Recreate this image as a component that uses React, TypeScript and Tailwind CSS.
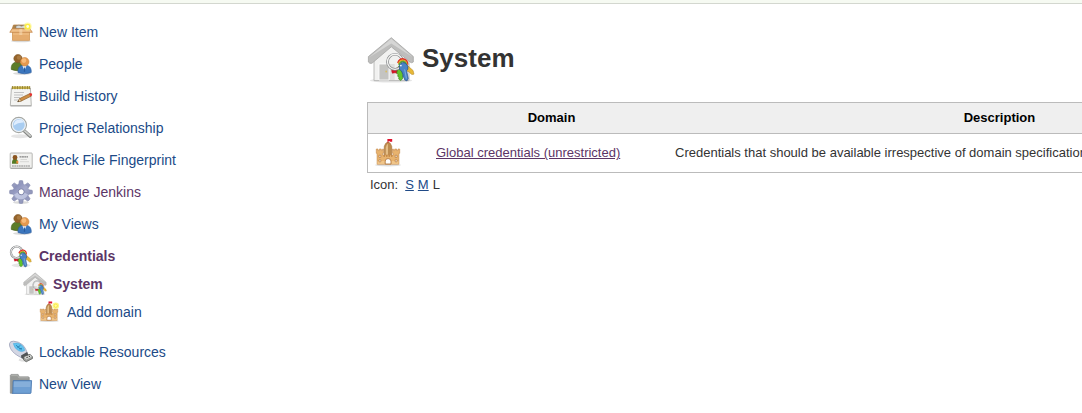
import React from "react";

function Sparkle({ x, y, r = 3 }: { x: number; y: number; r?: number }) {
  return (
    <g>
      <circle cx={x} cy={y} r={r + 1.2} fill="#fdf67a" opacity="0.6" />
      <circle cx={x} cy={y} r={r} fill="#fcee3c" />
      <circle cx={x} cy={y} r={r * 0.5} fill="#fffde0" />
    </g>
  );
}

function BoxIcon() {
  return (
    <svg viewBox="0 0 24 24" className="size-6">
      <ellipse cx="12" cy="20.9" rx="10" ry="1.4" fill="#000" opacity="0.15" />
      <path d="M4.5 5H20L21 9.5H3Z" fill="#a9834f" stroke="#b57a38" strokeWidth="0.7" />
      <path d="M7 6l3-.8 2.5 1 2.5-1 2 .8-.5 2.4H7Z" fill="#d7d9d6" stroke="#777" strokeWidth="0.5" />
      <path d="M3.5 9.3H20.5V20.3H3.5Z" fill="#ecb87d" stroke="#c98a45" strokeWidth="0.7" />
      <path d="M3.5 15H20.5V20.3H3.5Z" fill="#e2a768" opacity="0.7" />
      <path d="M3 8.8H21L23.3 12.3H.8Z" fill="#f0c08a" stroke="#c08040" strokeWidth="0.7" />
      <path d="M10.3 9h3v6h-3z" fill="#f6d9b0" opacity="0.6" />
      <Sparkle x={18.7} y={6.5} r={2.8} />
    </svg>
  );
}

function PeopleIcon() {
  return (
    <svg viewBox="0 0 24 24" className="size-6">
      <ellipse cx="13" cy="21.5" rx="9" ry="1.5" fill="#000" opacity="0.14" />
      <path d="M2.3 17.5C1.8 13 4 10 8.3 10s6.2 3 5.8 7.5Q8 20 2.3 17.5Z" fill="#5c7c28" stroke="#3f5a18" strokeWidth="0.6" />
      <circle cx="9" cy="6.6" r="4.2" fill="#94632b" stroke="#7d5220" strokeWidth="0.5" />
      <circle cx="10" cy="5.6" r="2.2" fill="#b98a50" opacity="0.6" />
      <path d="M9 20.6C8.5 15.8 10.8 13 15.5 13s7.2 2.8 6.7 7.6Q15.5 23 9 20.6Z" fill="#3b76bd" stroke="#2a5a9c" strokeWidth="0.6" />
      <path d="M13.3 13.5l2.2 5 2.1-5Z" fill="#eaf2fc" />
      <path d="M15.1 15.5h.8l.3 4.3h-1.4Z" fill="#2a5a9c" />
      <circle cx="15.7" cy="9.8" r="4.3" fill="#e5994f" stroke="#c47a35" strokeWidth="0.5" />
      <circle cx="14.9" cy="8.6" r="2.4" fill="#ffc98c" opacity="0.7" />
    </svg>
  );
}

function NotepadIcon() {
  return (
    <svg viewBox="0 0 24 24" className="size-6">
      <path d="M1.5 21.2h21v1.6h-21z" fill="#888" opacity="0.45" />
      <path d="M2.4 4H21.4L22.3 21.5H1.3Z" fill="#f4f4f2" stroke="#a5a5a1" strokeWidth="0.8" />
      <path d="M2.8 2.4H21V5H2.8Z" fill="#c8b44a" />
      <path d="M3.5 2v3.2M6 2v3.2M8.5 2v3.2M11 2v3.2M13.5 2v3.2M16 2v3.2M18.5 2v3.2M20.7 2v3.2" stroke="#8b7a32" strokeWidth="0.8" />
      <path d="M5 8.5h10M5 11h9M5 13.5h6M5 16h4" stroke="#b4b4b4" strokeWidth="0.8" />
      <path d="M8.8 17.7l1.9-3.2L21 9.5l1.4 2.6-10.2 5Z" fill="#cf8e44" stroke="#80521d" strokeWidth="0.6" />
      <path d="M8.8 17.7l1.9-3.2 1.7 2.5Z" fill="#f0d5a9" stroke="#66451e" strokeWidth="0.4" />
      <path d="M8.6 17.8l1.3-.3-.6-1Z" fill="#222" />
      <path d="M20.2 9.9l1.6-.9q1.8.4 1.3 2.3l-1.6.9Z" fill="#e63232" />
    </svg>
  );
}

function MagnifierIcon() {
  return (
    <svg viewBox="0 0 24 24" className="size-6">
      <ellipse cx="11" cy="20.2" rx="9" ry="2" fill="#000" opacity="0.1" />
      <path d="M15.4 15l5.8 5.3" stroke="#858784" strokeWidth="3.4" strokeLinecap="round" />
      <path d="M15.4 14.7l5.8 5.2" stroke="#cfd1ce" strokeWidth="1.6" strokeLinecap="round" />
      <circle cx="9.8" cy="9" r="7.6" fill="#b8d5f2" stroke="#a5a7a2" strokeWidth="1.2" />
      <circle cx="9.8" cy="9" r="6.5" fill="#a9cdf1" stroke="#f0f2f4" strokeWidth="1.1" />
      <path d="M4.5 9.7Q5 4 10.2 3.5q3.6 0 4.6 3Q9.2 6.2 4.5 9.7Z" fill="#e4f1ff" opacity="0.9" />
    </svg>
  );
}

function IdCardIcon() {
  return (
    <svg viewBox="0 0 24 24" className="size-6">
      <rect x="1.2" y="5" width="22" height="15.2" rx="0.8" fill="#f1f1ef" stroke="#b0b0ae" strokeWidth="0.9" />
      <path d="M1.5 20.4h21.7" stroke="#9d9d9a" strokeWidth="0.8" />
      <path d="M3 15.8q-.3-5 3-5t3 5Z" fill="#557b25" />
      <circle cx="6" cy="9.5" r="2.4" fill="#8b5520" />
      <path d="M7.3 15.5v-2.7h2v2.7Z" fill="#e78b3a" />
      <path d="M10.5 8.9h8.5" stroke="#666" strokeWidth="1" strokeDasharray="2 .4" />
      <path d="M11.5 11.5h6.5M11 13.7h9" stroke="#d0d0ce" strokeWidth="0.8" />
      <path d="M3 18h18.3" stroke="#888" strokeWidth="1.2" strokeDasharray="1.8 .5" />
    </svg>
  );
}

const TEETH = [0, 45, 90, 135, 180, 225, 270, 315];

function GearIcon() {
  return (
    <svg viewBox="0 0 24 24" className="size-6">
      <defs>
        <linearGradient id="gear" x1="0" y1="0" x2="1" y2="1">
          <stop offset="0" stopColor="#7c83b0" />
          <stop offset="0.5" stopColor="#a6aacb" />
          <stop offset="1" stopColor="#8b91b6" />
        </linearGradient>
      </defs>
      <ellipse cx="12" cy="22.4" rx="8" ry="1.4" fill="#000" opacity="0.14" />
      {TEETH.map((a) => (
        <path key={a} d="M9.4 6L10.3.8q1.7-.6 3.4 0L14.6 6Z" transform={`rotate(${a} 12 12)`} fill="#9499bd" stroke="#7a80a6" strokeWidth="0.5" />
      ))}
      <circle cx="12" cy="12" r="8.2" fill="url(#gear)" />
      <path d="M5 14.5Q12 9.5 19 14.5Q17 19 12 19.3Q7 19 5 14.5Z" fill="#d0d5ec" opacity="0.65" />
      <circle cx="12.2" cy="11.8" r="3" fill="#fff" stroke="#7379a2" strokeWidth="0.9" />
    </svg>
  );
}

function KeyBunch() {
  return (
    <g strokeLinejoin="round">
      <path d="M9.6 12.9L7.2 13.8l-2.2 1.2.6 2.2 2.2-.4 1 .6 2.8-2.3Z" fill="#d81627" stroke="#a40c18" strokeWidth="0.3" />
      <path d="M15.6 9.7l6 5.3.7 2.8-1.6.3-1.5-1.2-.6-.9-1.3-.3-2.7-3.3Z" fill="#e8b936" stroke="#af8420" strokeWidth="0.4" />
      <path d="M10.4 11.6l2.8 1.7.4 8-1.6 1.4-1.5-1.2.3-1.2-1-.8.2-1.6-1-.9Z" fill="#62c52b" stroke="#35801b" strokeWidth="0.5" />
      <circle cx="7.7" cy="8.3" r="5.8" fill="none" stroke="#85878a" strokeWidth="2.1" />
      <circle cx="7.7" cy="8.3" r="5.8" fill="none" stroke="#f4f4f2" strokeWidth="1" />
      <path d="M9.9 9.2q1.3-3.6 4.6-3 3 .9 2.8 4.4" fill="none" stroke="#dd3028" strokeWidth="1.3" />
      <path d="M10.3 10q1.3-3.3 4-2.8 2.6.8 2.4 3.8" fill="none" stroke="#e7a51e" strokeWidth="1" />
      <path d="M10.7 10.8q1.3-3.1 3.5-2.7 2.2.7 2.1 3.4" fill="none" stroke="#51a43b" strokeWidth="1.2" />
      <path d="M11.2 10.8q2-3 4.8-1.2 2.3 1.9 1.6 4.5l-1 .9 1.3 6.2-1 1.8-1.7-.7-.4-1.6-1-.9.1-1.6-1.2-2.8-1.6-1.2Z" fill="#4a83c5" stroke="#244f87" strokeWidth="0.5" />
      <path d="M15.1 14.2l1.4 7" stroke="#8ab6e6" strokeWidth="0.6" />
      <circle cx="12.2" cy="11.2" r="0.7" fill="#eef3f8" />
    </g>
  );
}

function KeysIcon() {
  return (
    <svg viewBox="0 0 24 24" className="size-6">
      <ellipse cx="12" cy="21.3" rx="9.5" ry="2" fill="#000" opacity="0.1" />
      <KeyBunch />
    </svg>
  );
}

function HouseIcon({ className }: { className: string }) {
  return (
    <svg viewBox="0 0 48 48" className={className}>
      <ellipse cx="24" cy="44.5" rx="21" ry="2" fill="#000" opacity="0.1" />
      <path d="M7 20L24 6 42 20V44.6H7Z" fill="#f1f1f0" stroke="#b4b4b2" strokeWidth="0.9" />
      <path d="M12 28h10v16H12z" fill="#c4c4c2" stroke="#fff" strokeWidth="0.8" />
      <path d="M22.7 28h5v16h-5z" fill="#dededc" />
      <circle cx="19.2" cy="35.5" r="0.9" fill="#d8bd64" />
      <path d="M24.3 1.7L46.3 20.5V26Q44.5 27.5 43 26L24.3 10.8 5 27.2Q2.5 28 1.4 26V20.6Z" fill="#bebebd" stroke="#a6a6a5" strokeWidth="0.8" />
      <path d="M24.3 2.8L45.5 21 24.3 7.6 2 21.5Z" fill="#d6d6d5" />
      <g transform="translate(18 15) scale(1.3)">
        <KeyBunch />
      </g>
    </svg>
  );
}

function Castle() {
  return (
    <g>
      <ellipse cx="16" cy="28" rx="13" ry="1.4" fill="#000" opacity="0.13" />
      <path d="M12.3 22V9.5Q13 6 16 4.8q3 1.2 3.7 4.7V22Z" fill="#bd8c50" stroke="#a9743a" strokeWidth="0.7" />
      <path d="M13.8 19V10.4Q14.5 7.5 16 6.8v12.2Z" fill="#e4bd85" />
      <path d="M16 2v4" stroke="#d5112e" strokeWidth="0.7" />
      <path d="M15.6 1.9h4.6v2.8h-2.3v-.5h-2.3Z" fill="#e0142f" />
      <path d="M4.3 12h1.7v1.6h1.3V12h2v1.6h1.3V12h.9v4.3h-1V18h11v-1.7h-1V12h.9v1.6h1.3V12h2v1.6h1.3V12h1.7v4.3h-.8v10.9H5.1V16.3h-.8Z" fill="#e8b36e" stroke="#c68a4a" strokeWidth="0.6" />
      <path d="M5.5 24h21v3H5.5Z" fill="#f2ca91" opacity="0.8" />
      <path d="M7 18.3h1.8v2H7zM23.2 18.3H25v2h-1.8zM7 22.8h1.8v2H7zM23.2 22.8H25v2h-1.8z" fill="#fff" stroke="#a9692c" strokeWidth="0.6" />
      <path d="M13.2 27v-3q.2-2.4 2.9-2.4t2.9 2.4v3Z" fill="#fff" stroke="#a9692c" strokeWidth="0.8" />
      <path d="M11.5 19h9" stroke="#a96e31" strokeWidth="1" strokeDasharray="1.5 1" />
    </g>
  );
}

function CastleNewIcon() {
  return (
    <svg viewBox="0 0 32 32" className="size-6">
      <Castle />
      <circle cx="25" cy="7.6" r="4.4" fill="#fdf45f" opacity="0.75" />
      <circle cx="25" cy="7.6" r="2.2" fill="#fffba5" stroke="#f5e332" strokeWidth="1" />
    </svg>
  );
}

function UsbIcon() {
  return (
    <svg viewBox="0 0 24 24" className="size-6">
      <path d="M10 19.5q6 3 13-1" fill="none" stroke="#000" strokeWidth="2" opacity="0.12" />
      <path d="M.5 3.8Q.8 1 4.5 1.2 9.5 1.4 13.6 4.8q3.2 3.2 4.7 8.1l-5.2 5.1Q4.2 13.9 1.7 8.8.2 5.8.5 3.8Z" fill="#d4d7e4" stroke="#9b9fb8" strokeWidth="0.8" />
      <path d="M4.3 3.4Q9.3 1.9 13 5.3q2.7 2.6 2.7 5.3-3 2-6.4 0Q5.2 8.2 4.3 3.4Z" fill="#62c3ef" stroke="#48a6da" strokeWidth="0.5" />
      <path d="M7 5.2l5.7 4.7M8.4 7.6l3-2.2M10 8.9l3-.6" stroke="#2377a9" strokeWidth="0.8" />
      <path d="M12 15.5l6-3.5 1.8 3.3-4.8 4.1-2.6-1.4Z" fill="#505457" />
      <path d="M14.6 16.8l6.5-2.5 2.5 2.6v1.5l-6.4 3.4-2.7-2Z" fill="#9d9f9c" stroke="#555753" strokeWidth="0.7" />
      <path d="M15.3 17l5.8-2.1 1.6 1.9-5.5 2.7Z" fill="#d9dbd8" />
      <path d="M17.4 17.7l1.4-.5M19.8 16.7l1.2-.5" stroke="#333" strokeWidth="1" />
    </svg>
  );
}

function FolderIcon() {
  return (
    <svg viewBox="0 0 24 24" className="size-6">
      <path d="M1.3 21.2V3.2l.8-.8h7l1.2 2.4h9.2l.8.8v4H4v11.6Z" fill="#979996" stroke="#858784" strokeWidth="0.6" />
      <path d="M2.2 3.6h6.5l1.2 2.2h9.5" fill="none" stroke="#b5b7b4" strokeWidth="0.8" />
      <path d="M4.2 8.6H22.6L22 20.9Q21.9 21.4 21.3 21.4H3.2Q3.8 21 3.8 20.4Z" fill="#6e9fd3" stroke="#4474ad" strokeWidth="0.8" />
      <path d="M5 9.5h16.7l-.3 5.5H4.6Z" fill="#9ebfe2" opacity="0.5" />
    </svg>
  );
}

interface Task {
  label: string;
  icon: React.ReactNode;
  row: string;
  text: string;
}

const BLUE = "text-[#204a87]";
const VISITED = "text-[#5c3566]";

const tasks: Task[] = [
  { label: "New Item", icon: <BoxIcon />, row: "h-8 pl-[9px]", text: BLUE },
  { label: "People", icon: <PeopleIcon />, row: "h-8 pl-[9px]", text: BLUE },
  { label: "Build History", icon: <NotepadIcon />, row: "h-8 pl-[9px]", text: BLUE },
  { label: "Project Relationship", icon: <MagnifierIcon />, row: "h-8 pl-[9px]", text: BLUE },
  { label: "Check File Fingerprint", icon: <IdCardIcon />, row: "h-8 pl-[9px]", text: BLUE },
  { label: "Manage Jenkins", icon: <GearIcon />, row: "h-8 pl-[9px]", text: VISITED },
  { label: "My Views", icon: <PeopleIcon />, row: "h-8 pl-[9px]", text: BLUE },
  { label: "Credentials", icon: <KeysIcon />, row: "h-8 pl-[9px]", text: "text-[#5c3566] font-bold" },
  { label: "System", icon: <HouseIcon className="size-6" />, row: "h-6 pl-[23px]", text: "text-[#5c3566] font-bold" },
  { label: "Add domain", icon: <CastleNewIcon />, row: "mt-1 h-6 pl-[37px]", text: BLUE },
  { label: "Lockable Resources", icon: <UsbIcon />, row: "mt-3 h-8 pl-[9px]", text: BLUE },
  { label: "New View", icon: <FolderIcon />, row: "h-8 pl-[9px]", text: BLUE },
];

export default function App() {
  return (
    <div className="h-[413px] w-full overflow-hidden bg-white font-['Liberation_Sans',Arial,sans-serif] text-[13px] text-[#333]">
      <div className="h-1 border-b border-[#d3d7cf] bg-[#f6faf2]" />
      <div className="flex">
        <nav className="w-[367px] shrink-0 pt-3">
          {tasks.map((t) => (
            <a key={t.label} href="#" className={`flex items-center gap-1.5 text-[14px] leading-5 ${t.row} ${t.text}`}>
              <span className="shrink-0">{t.icon}</span>
              <span>{t.label}</span>
            </a>
          ))}
        </nav>
        <main className="min-w-0 flex-1 pt-8">
          <h1 className="flex h-12 items-center gap-[7px] text-[26px] font-bold leading-8">
            <HouseIcon className="size-12 shrink-0" />
            <span className="-mt-1">System</span>
          </h1>
          <div className="mt-[18px] w-[966px] border border-[#bbb]">
            <div className="flex h-[31px] items-center border-b border-[#bbb] bg-[#efefef] text-center font-bold text-black">
              <div className="w-[68px] shrink-0" />
              <div className="w-[231px] shrink-0">Domain</div>
              <div className="w-[665px] shrink-0">Description</div>
            </div>
            <div className="flex h-[38px] items-center">
              <div className="w-[68px] shrink-0 pl-1">
                <svg viewBox="0 0 32 32" className="size-8">
                  <Castle />
                </svg>
              </div>
              <div className="w-[239px] shrink-0">
                <a href="#" className="text-[#5c3566] underline">Global credentials (unrestricted)</a>
              </div>
              <div className="whitespace-nowrap">Credentials that should be available irrespective of domain specification</div>
            </div>
          </div>
          <div className="flex pl-[3px] pt-0.5 leading-5">
            <span className="mr-[7px]">Icon:</span>
            <a href="#" className="mr-1 text-[#204a87] underline">S</a>
            <a href="#" className="mr-1 text-[#204a87] underline">M</a>
            <span>L</span>
          </div>
        </main>
      </div>
    </div>
  );
}
